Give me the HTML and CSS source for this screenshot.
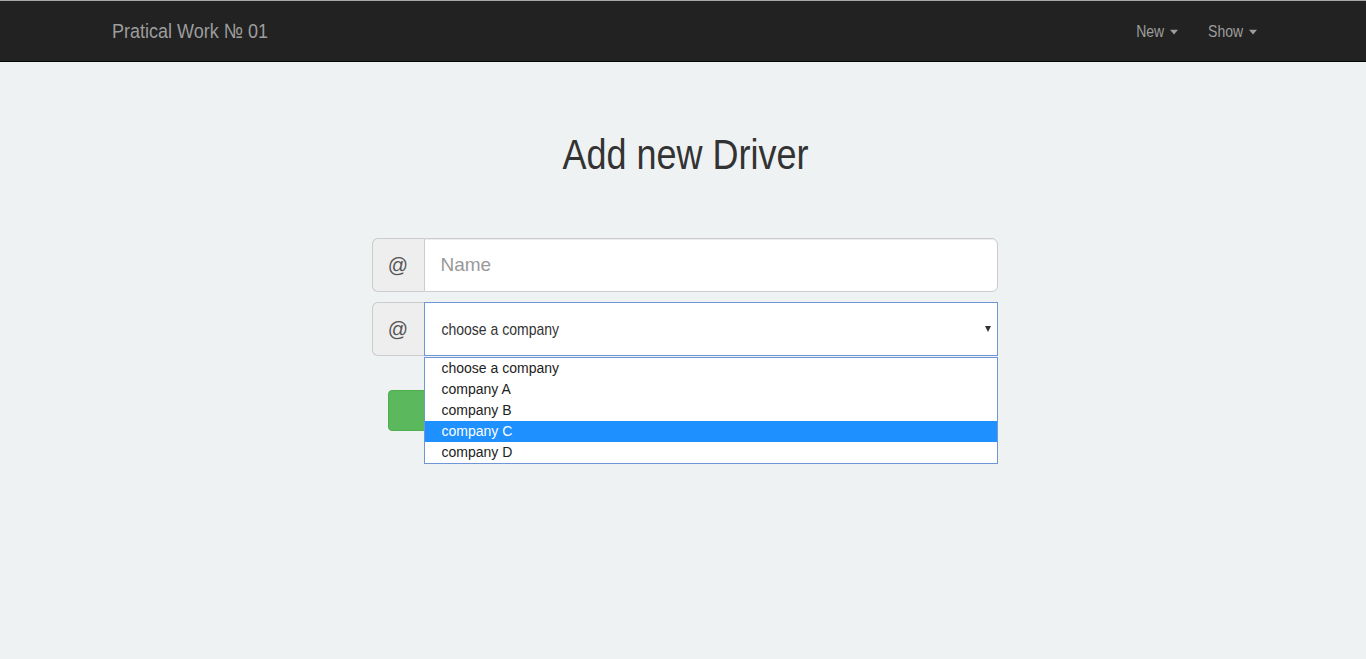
FILE: index.html
```html
<!DOCTYPE html>
<html lang="en">
<head>
<meta charset="utf-8">
<title>Pratical Work № 01</title>
<link rel="stylesheet" href="styles.css">
</head>
<body>
<nav class="navbar">
  <div class="navbar-inner">
    <a class="brand" href="#">Pratical Work № 01</a>
    <ul class="nav">
      <li><a href="#">New <span class="caret"></span></a></li>
      <li><a href="#">Show <span class="caret"></span></a></li>
    </ul>
  </div>
</nav>
<main class="page">
  <h1 class="title">Add new Driver</h1>
  <form class="form">
    <div class="input-group">
      <span class="addon">@</span>
      <input class="field" type="text" placeholder="Name">
    </div>
    <div class="input-group select-group">
      <span class="addon">@</span>
      <div class="select">
        <span class="select-value">choose a company</span>
        <span class="select-arrow"></span>
      </div>
      <ul class="options">
        <li>choose a company</li>
        <li>company A</li>
        <li>company B</li>
        <li class="active">company C</li>
        <li>company D</li>
      </ul>
    </div>
    <div class="actions">
      <button class="btn-success" type="button" aria-label="Add Driver"></button>
    </div>
  </form>
</main>
</body>
</html>
```

FILE: styles.css
```css
* { box-sizing: border-box; }
html, body { margin: 0; padding: 0; }
body {
  background: #eef2f3;
  font-family: "Liberation Sans", Arial, sans-serif;
  font-size: 14px;
  color: #333;
  height: 659px;
  overflow: hidden;
}
.navbar {
  background: #222;
  border-top: 1px solid #a9a9a9;
  border-bottom: 1px solid #080808;
  height: 62px;
}
.navbar-inner {
  width: 1170px;
  margin: 0 auto;
  padding: 0 0 0 14px;
  display: flex;
  align-items: center;
  justify-content: space-between;
  height: 60px;
}
.brand {
  color: #9d9d9d;
  font-size: 18px;
  text-decoration: none;
  display: inline-block;
  transform: scaleY(1.15);
}
.nav {
  list-style: none;
  margin: 0 -4px 0 0;
  padding: 0;
  display: flex;
}
.nav a {
  display: block;
  padding: 0 15px;
  color: #9d9d9d;
  text-decoration: none;
  font-size: 14px;
  transform: scaleY(1.15);
}
.caret {
  display: inline-block;
  width: 0;
  height: 0;
  margin-left: 2px;
  vertical-align: middle;
  border-top: 4px solid #9d9d9d;
  border-left: 4px solid transparent;
  border-right: 4px solid transparent;
}
.page {
  padding-top: 73px;
}
.title {
  margin: 0;
  padding-left: 5px;
  text-align: center;
  font-size: 36px;
  font-weight: 500;
  line-height: 40px;
  color: #333;
  transform: scaleY(1.2);
}
.form {
  width: 629px;
  margin: 63px auto 0;
  padding-left: 3px;
}
.input-group {
  display: flex;
  height: 54px;
  margin-bottom: 10px;
  position: relative;
}
.addon {
  width: 52px;
  flex: none;
  display: flex;
  align-items: center;
  justify-content: center;
  background: #eee;
  border: 1px solid #ccc;
  border-right: none;
  border-radius: 6px 0 0 6px;
  font-size: 20px;
  color: #555;
}
.field {
  flex: 1;
  min-width: 0;
  border: 1px solid #ccc;
  border-radius: 0 6px 6px 0;
  background: #fff;
  padding: 0 16px;
  font-family: inherit;
  font-size: 19px;
  color: #555;
  box-shadow: inset 0 1px 1px rgba(0,0,0,.075);
  outline: none;
}
.field::placeholder { color: #999; }
.select {
  flex: 1;
  display: flex;
  align-items: center;
  justify-content: space-between;
  background: #fff;
  border: 1px solid #6f97d8;
  padding: 0 6px 0 17px;
  font-size: 14px;
  color: #333;
}
.select-value { display: inline-block; transform: scaleY(1.15); }
.select-arrow {
  width: 0;
  height: 0;
  border-top: 6px solid #333;
  border-left: 3px solid transparent;
  border-right: 3px solid transparent;
}
.options {
  position: absolute;
  left: 52px;
  right: 0;
  top: 55px;
  margin: 0;
  padding: 0;
  list-style: none;
  background: #fff;
  border: 1px solid #6f97d8;
  z-index: 5;
}
.options li {
  height: 21px;
  line-height: 21px;
  padding-left: 17px;
  font-size: 14px;
  color: #222;
}
.options li.active {
  background: #1e90ff;
  color: #fff;
}
.actions {
  padding: 24px 0 0 16px;
}
.btn-success {
  display: block;
  width: 300px;
  height: 41px;
  background: #5cb85c;
  border: 1px solid #4cae4c;
  border-radius: 4px;
}
```
